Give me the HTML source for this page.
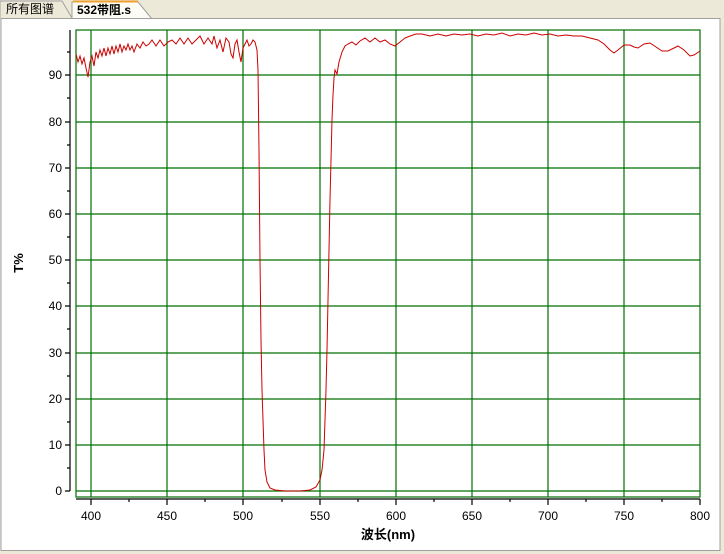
<!DOCTYPE html>
<html><head><meta charset="utf-8"><style>
body{margin:0;width:724px;height:554px;background:#ece9d8;overflow:hidden;font-family:"Liberation Sans","Noto Sans CJK SC",sans-serif}
</style></head><body>
<svg width="724" height="554" xmlns="http://www.w3.org/2000/svg" style="position:absolute;left:0;top:0">
<rect x="0" y="0" width="724" height="554" fill="#ece9d8"/>
<!-- tabs -->
<path d="M0 18 V1 H62 L72 18" fill="#ece9d8" stroke="#a0a0a0"/>
<text x="6" y="13" font-size="12" font-family="Liberation Sans,Noto Sans CJK SC,sans-serif">所有图谱</text>
<path d="M72 19 V2 H138 L152 19" fill="#fcfcf4" stroke="#a0a0a0"/>
<line x1="73" y1="1.5" x2="138" y2="1.5" stroke="#f0a030" stroke-width="2"/>
<text x="77" y="14" font-size="12" font-weight="bold" font-family="Liberation Sans,Noto Sans CJK SC,sans-serif">532带阻.s</text>
<!-- window -->
<rect x="1" y="18.5" width="719" height="532" fill="#fff" stroke="#a0a0a0"/>
<!-- grid -->
<g stroke="#007000" stroke-width="1.2" fill="none">
<rect x="76" y="30" width="624" height="467"/>
<path d="M91 30V497M167 30V497M243 30V497M320 30V497M396 30V497M472 30V497M548 30V497M624 30V497"/>
<path d="M76 491H700M76 445H700M76 399H700M76 353H700M76 306H700M76 260H700M76 214H700M76 168H700M76 122H700M76 75H700"/>
</g>
<!-- axes -->
<g stroke="#000" stroke-width="1.2" fill="none">
<path d="M70 30V491"/>
<path d="M65 491H70M65 445H70M65 399H70M65 353H70M65 306H70M65 260H70M65 214H70M65 168H70M65 122H70M65 75H70"/>
<path d="M67 468H70M67 422H70M67 376H70M67 329H70M67 283H70M67 237H70M67 191H70M67 145H70M67 98H70M67 52H70"/>
<path d="M76 499H700"/>
<path d="M91 499V505M167 499V505M243 499V505M320 499V505M396 499V505M472 499V505M548 499V505M624 499V505M700 499V505"/>
<path d="M129 499V502M205 499V502M282 499V502M358 499V502M434 499V502M510 499V502M586 499V502M662 499V502"/>
</g>
<g font-size="12" text-anchor="end" font-family="Liberation Sans,sans-serif">
<text x="62" y="495">0</text><text x="62" y="449">10</text><text x="62" y="403">20</text><text x="62" y="357">30</text><text x="62" y="310">40</text><text x="62" y="264">50</text><text x="62" y="218">60</text><text x="62" y="172">70</text><text x="62" y="126">80</text><text x="62" y="79">90</text>
</g>
<g font-size="12" text-anchor="middle" font-family="Liberation Sans,sans-serif">
<text x="91" y="520">400</text><text x="167" y="520">450</text><text x="243" y="520">500</text><text x="320" y="520">550</text><text x="396" y="520">600</text><text x="472" y="520">650</text><text x="548" y="520">700</text><text x="624" y="520">750</text><text x="700" y="520">800</text>
</g>
<text x="388" y="539" font-size="13" font-weight="bold" text-anchor="middle" font-family="Liberation Sans,Noto Sans CJK SC,sans-serif">波长(nm)</text>
<text transform="translate(23,263) rotate(-90)" font-size="13" font-weight="bold" text-anchor="middle" font-family="Liberation Sans,sans-serif">T%</text>
<!-- curve -->
<polyline fill="none" stroke="#cc0000" stroke-width="1" points="
76,54 78,62 80,56 82,64 84,58 86,68 88,77 90,62 92,56 94,66 96,52 98,58 100,50 102,56 104,48 106,56 108,48 110,54 112,46 114,54 116,46 118,52 120,44 122,52 124,46 126,50 128,44 130,50 132,46 134,52 137,44 140,48 143,42 146,46 149,44 152,40 156,46 160,40 164,46 168,42 172,40 176,44 180,38 184,44 188,38 192,44 196,40 200,36 204,44 208,38 212,44 214,36 217,48 220,40 223,52 226,38 229,42 231,54 233,58 235,44 237,40 239,52 241,62 243,48 245,44 247,40 249,46 251,44 253,40 255,42 257,50 258,70 259,150 260,260 261,340 262,390 263,420 264,450 265,470 267,482 270,488 275,490 285,491 300,491 310,490 316,487 320,480 322,470 324,450 325,420 326,390 327,350 328,300 329,250 330,200 331,160 332,120 333,95 334,78 335,70 337,74 339,62 342,52 345,46 348,44 352,42 356,45 360,41 365,38 370,42 375,38 380,42 385,40 390,44 395,46 400,42 405,38 410,36 416,34 422,34 430,36 438,34 446,36 454,34 462,35 470,34 478,36 486,34 494,35 502,33 510,36 518,34 526,35 534,33 542,35 550,34 558,36 566,35 574,36 582,36 590,38 598,40 604,44 610,50 614,53 618,50 624,45 630,45 634,47 638,48 644,44 650,43 656,47 662,51 668,51 674,48 678,46 684,50 690,56 694,55 700,51"/>
</svg>
</body></html>
